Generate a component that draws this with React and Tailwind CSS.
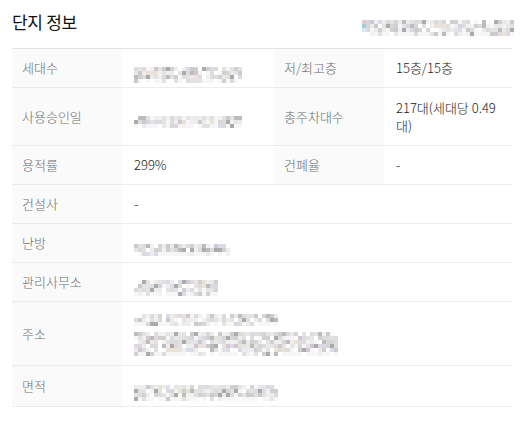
import React from "react";

const PALETTE = [
  "bg-[#e9e9e9]",
  "bg-[#dcdcdc]",
  "bg-[#d0d0d0]",
  "bg-[#bcbcbc]",
  "bg-[#f1f1f1]",
  "bg-[#ddd8e2]",
  "bg-[#d8dee5]",
  "bg-[#e8e2d9]",
  "bg-[#ababab]",
  "bg-[#f6f6f6]",
  "bg-[#cfc8d0]",
  "bg-[#e4e4e4]",
  "bg-[#e1e1e1]",
  "bg-[#ececec]",
  "bg-[#d6d6d6]",
  "bg-[#eeeeee]",
];

function Blur({ w, h, seed = 1, cell = 4 }) {
  const cols = Math.round(w / cell);
  const rows = Math.round(h / cell);
  let s = seed * 9301 + 49297;
  const next = () => {
    s = (s * 9301 + 49297) % 233280;
    return s / 233280;
  };
  const cells = [];
  for (let r = 0; r < rows; r++) {
    const row = [];
    for (let c = 0; c < cols; c++) {
      const v = next();
      let cls;
      if (r === rows - 1 && v < 0.5) cls = "bg-[#f6f6f6]";
      else cls = PALETTE[Math.floor(next() * PALETTE.length)];
      if (v > 0.9) cls = "bg-white";
      row.push(<div key={c} className={`w-[4px] h-[4px] ${cls}`} />);
    }
    cells.push(
      <div key={r} className="flex">
        {row}
      </div>
    );
  }
  return <div className="inline-flex flex-col">{cells}</div>;
}

function Label({ children }) {
  return (
    <td className="bg-[#fafafa] pl-[10px] pr-2 text-[13px] font-light text-[#6f6f6f] align-middle">
      {children}
    </td>
  );
}

function Val({ children, colSpan }) {
  return (
    <td
      colSpan={colSpan}
      className="pl-[12px] pr-[10px] text-[13px] font-light text-[#222] align-middle"
    >
      {children}
    </td>
  );
}

export default function App() {
  return (
    <div
      className="w-[530px] h-[431px] bg-white px-3"
      style={{ fontFamily: '"Noto Sans CJK KR", "Noto Sans", sans-serif' }}
    >
      <div className="flex justify-between h-[48px]">
        <h2 className="pt-[10px] text-[17px] leading-[24px] font-normal text-[#111] tracking-[-0.3px]">
          단지 정보
        </h2>
        <div className="pt-[20px] pr-[4px]">
          <div className="flex">
            <div className="flex flex-col">
              <div className="w-[4px] h-[4px] bg-[#e8c8cc]" />
              <div className="w-[4px] h-[4px] bg-[#9ccfdc]" />
              <div className="w-[4px] h-[4px] bg-[#d6e8f0]" />
              <div className="w-[4px] h-[4px] bg-white" />
            </div>
            <Blur w={146} h={16} seed={3} />
          </div>
        </div>
      </div>
      <table className="w-[500px] table-fixed border-collapse border-t border-[#e3e3e3]">
        <colgroup>
          <col className="w-[110px]" />
          <col className="w-[152px]" />
          <col className="w-[110px]" />
          <col className="w-[128px]" />
        </colgroup>
        <tbody>
          <tr className="h-[39px] border-b border-[#ececec]">
            <Label>세대수</Label>
            <Val>
              <div className="pt-[2px]">
                <Blur w={108} h={16} seed={7} />
              </div>
            </Val>
            <Label>저/최고층</Label>
            <Val>15층/15층</Val>
          </tr>
          <tr className="h-[58px] border-b border-[#ececec]">
            <Label>사용승인일</Label>
            <Val>
              <Blur w={108} h={12} seed={11} />
            </Val>
            <Label>총주차대수</Label>
            <td className="pl-[12px] pr-[4px] text-[13px] font-light leading-[18px] text-[#222] align-middle">
              217대(세대당 0.49 대)
            </td>
          </tr>
          <tr className="h-[39px] border-b border-[#ececec]">
            <Label>용적률</Label>
            <Val>299%</Val>
            <Label>건폐율</Label>
            <Val>-</Val>
          </tr>
          <tr className="h-[39px] border-b border-[#ececec]">
            <Label>건설사</Label>
            <Val colSpan={3}>-</Val>
          </tr>
          <tr className="h-[39px] border-b border-[#ececec]">
            <Label>난방</Label>
            <Val colSpan={3}>
              <div className="pt-[2px]">
                <Blur w={96} h={12} seed={19} />
              </div>
            </Val>
          </tr>
          <tr className="h-[39px] border-b border-[#ececec]">
            <Label>관리사무소</Label>
            <Val colSpan={3}>
              <div className="pt-[1px]">
                <Blur w={84} h={16} seed={23} />
              </div>
            </Val>
          </tr>
          <tr className="h-[64px] border-b border-[#ececec]">
            <Label>주소</Label>
            <Val colSpan={3}>
              <div className="flex flex-col gap-[6px] pt-[2px]">
                <Blur w={144} h={12} seed={29} />
                <Blur w={204} h={24} seed={31} />
              </div>
            </Val>
          </tr>
          <tr className="h-[41px] border-b border-[#ececec]">
            <Label>면적</Label>
            <Val colSpan={3}>
              <div className="pt-[2px]">
                <Blur w={144} h={16} seed={37} />
              </div>
            </Val>
          </tr>
        </tbody>
      </table>
    </div>
  );
}
